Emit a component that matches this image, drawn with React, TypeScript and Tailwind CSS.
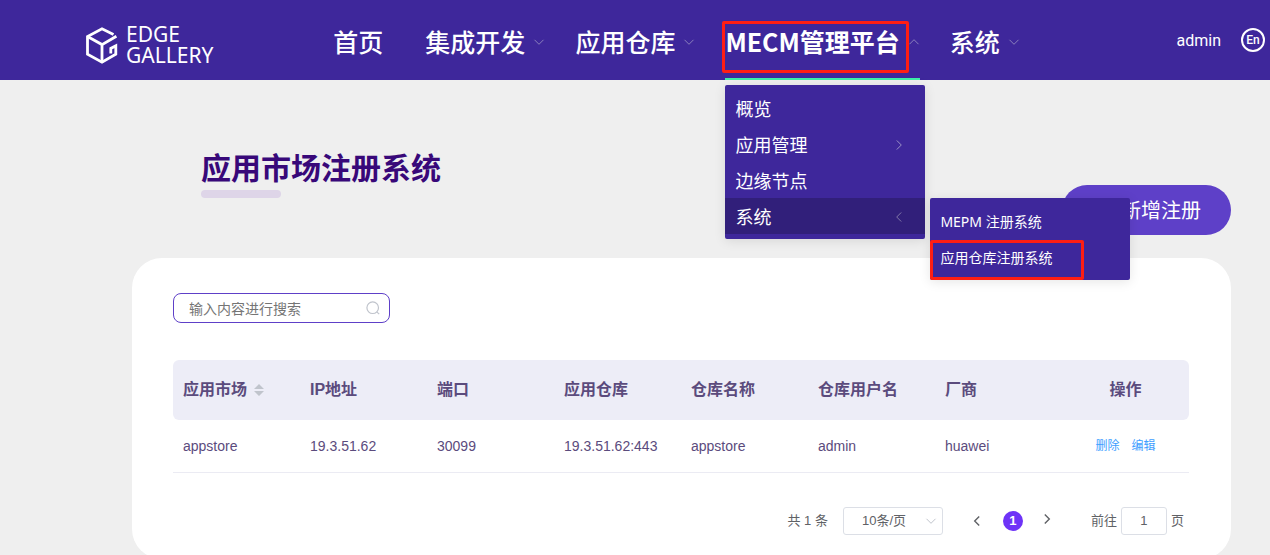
import { useState } from 'react';
import type { ReactNode } from 'react';

function Chevron({ className }: { className: string }) {
  return (
    <svg viewBox="0 0 12 12" className={className} fill="none" stroke="currentColor" aria-hidden="true">
      <path d="M1.5 3.8 6 8.3l4.5-4.5" />
    </svg>
  );
}

function Logo() {
  return (
    <a href="#home" className="flex items-center gap-2 text-white">
      <svg viewBox="0 0 32 37" className="h-[37px] w-8" fill="none" stroke="currentColor" strokeWidth="2.8" aria-hidden="true">
        <path d="M27.5 7.6 16 1.8 1.5 9.6v17.6L16 35.2l13.8-8v-8.4l-5 2.6v5" />
        <path d="M1.5 9.6 16 17.6l14.4-8.4M16 17.4v18" />
      </svg>
      <span className="flex flex-col font-['Noto_Sans',sans-serif] text-[21px] leading-[21px]">
        <span>EDGE</span>
        <span>GALLERY</span>
      </span>
    </a>
  );
}

function NavItem({ label, children }: { label: string; children?: ReactNode }) {
  const active = Boolean(children);
  return (
    <li className={active ? 'relative h-full border-b-2 border-[#3cf0a8] pt-1.5' : 'relative h-full border-b-2 border-transparent pt-1.5'}>
      <a href="#nav" className="flex h-full items-center gap-2">
        <span className={active ? 'font-bold' : 'font-medium'}>{label}</span>
        <Chevron className={active ? 'size-3 rotate-180 text-[#8b80bd]' : 'size-3 text-[#8b80bd]'} />
      </a>
      {children}
    </li>
  );
}

function MenuRow({ label, arrow }: { label: string; arrow?: boolean }) {
  return (
    <li>
      <a href="#menu" className="flex h-9 items-center justify-between px-2.5 pt-0.5">
        {label}
        {arrow && <Chevron className="mr-2.5 size-3 -rotate-90 text-[#9c92c6]" />}
      </a>
    </li>
  );
}

function PlatformMenu() {
  return (
    <ul className="absolute top-[85px] left-0 z-20 w-[200px] rounded-xs bg-[#3e279b] py-[5px] font-['Noto_Sans','Noto_Sans_CJK_SC',sans-serif] text-lg font-normal shadow-[0_2px_12px_rgba(0,0,0,0.1)]">
      <MenuRow label="概览" />
      <MenuRow label="应用管理" arrow />
      <MenuRow label="边缘节点" />
      <li className="relative">
        <a href="#system" className="flex h-9 items-center justify-between bg-[#311f7a] px-2.5 pt-0.5">
          系统
          <Chevron className="mr-2.5 size-3 rotate-90 text-[#8379a8]" />
        </a>
        <ul className="absolute top-0 left-[205px] w-[200px] rounded-xs bg-[#3e279b] py-[5px] text-sm shadow-[0_2px_12px_rgba(0,0,0,0.1)]">
          <MenuRow label="MEPM 注册系统" />
          <MenuRow label="应用仓库注册系统" />
          <li className="pointer-events-none absolute bottom-0 left-0 h-10 w-[154px] rounded-xs border-3 border-[#ff1e14]" aria-hidden="true" />
        </ul>
      </li>
    </ul>
  );
}

function Header() {
  return (
    <header className="flex h-20 items-center bg-[#3e279b] pr-[5px] pl-[86px] text-white">
      <div className="pt-2.5">
        <Logo />
      </div>
      <nav className="ml-[120px] h-full">
        <ul className="flex h-full gap-[30px] text-[25px] whitespace-nowrap font-['Noto_Sans_CJK_SC',sans-serif]">
          <li className="mr-3 h-full border-b-2 border-transparent pt-1.5">
            <a href="#index" className="flex h-full items-center font-medium">
              首页
            </a>
          </li>
          <NavItem label="集成开发" />
          <NavItem label="应用仓库" />
          <NavItem label="MECM管理平台">
            <span className="pointer-events-none absolute top-[21px] -left-[3px] h-[52px] w-[187px] rounded-xs border-3 border-[#ff1e14]" aria-hidden="true" />
            <PlatformMenu />
          </NavItem>
          <NavItem label="系统" />
        </ul>
      </nav>
      <div className="ml-auto flex items-center gap-5">
        <a href="#user" className="pt-0.5 font-['Roboto',sans-serif] text-base">
          admin
        </a>
        <button type="button" className="flex size-6 items-center justify-center rounded-full border-2 border-white font-['Roboto',sans-serif] text-xs font-medium">
          En
        </button>
      </div>
    </header>
  );
}

const columns = ['应用市场', 'IP地址', '端口', '应用仓库', '仓库名称', '仓库用户名', '厂商'];
const cells = ['appstore', '19.3.51.62', '30099', '19.3.51.62:443', 'appstore', 'admin', 'huawei'];

function RegistryTable() {
  return (
    <table className="mt-[37px] w-full table-fixed text-left font-['Liberation_Sans','Noto_Sans_CJK_SC',sans-serif] text-[#5b4b7d]">
      <thead>
        <tr className="h-[60px] bg-[#ededf7] text-base">
          {columns.map((c, i) => (
            <th key={c} className="px-2.5 font-bold whitespace-nowrap first:rounded-l-md">
              {i === 0 ? (
                <button type="button" className="flex items-center gap-[7px]">
                  {c}
                  <svg viewBox="0 0 10 12" className="h-3 w-2.5" fill="#c0c4cc" aria-hidden="true">
                    <path d="M5 0l5 5H0zM5 12l5-5H0z" />
                  </svg>
                </button>
              ) : (
                c
              )}
            </th>
          ))}
          <th className="rounded-r-md px-2.5 text-center font-bold">操作</th>
        </tr>
      </thead>
      <tbody>
        <tr className="h-[52px] border-b border-[#ebebf3] text-sm">
          {cells.map((c, i) => (
            <td key={i} className="px-2.5">
              {c}
            </td>
          ))}
          <td className="px-2.5 text-center text-xs text-[#409eff]">
            <div className="flex justify-center gap-3">
              <button type="button">删除</button>
              <button type="button">编辑</button>
            </div>
          </td>
        </tr>
      </tbody>
    </table>
  );
}

function Pagination() {
  const [page, setPage] = useState('1');
  return (
    <div className="mt-[34px] flex h-7 items-center justify-end pr-[5px] font-['Liberation_Sans','Noto_Sans_CJK_SC',sans-serif] text-[13px] text-[#606266]">
      <span>共 1 条</span>
      <div className="relative ml-[15px]">
        <select aria-label="每页条数" className="h-7 w-[100px] appearance-none rounded-[3px] border border-[#dcdfe6] bg-white pl-[18px]">
          <option>10条/页</option>
        </select>
        <Chevron className="pointer-events-none absolute top-2 right-1.5 size-3 text-[#c0c4cc]" />
      </div>
      <button type="button" aria-label="上一页" className="ml-7 text-[#606266]">
        <Chevron className="size-3 rotate-90 stroke-[1.4]" />
      </button>
      <button type="button" className="ml-5 size-5 rounded-full bg-[#6e33f7] leading-5 font-bold text-white">
        1
      </button>
      <button type="button" aria-label="下一页" className="ml-[18px] pb-1 text-[#606266]">
        <Chevron className="size-3 -rotate-90 stroke-[1.4]" />
      </button>
      <label className="ml-[38px] flex items-center gap-1">
        前往
        <input value={page} onChange={(e) => setPage(e.target.value)} className="h-7 w-[46px] rounded-[3px] border border-[#dcdfe6] text-center" />
        页
      </label>
    </div>
  );
}

export default function App() {
  return (
    <div className="min-h-screen bg-[#efefef] font-['Noto_Sans','Noto_Sans_CJK_SC',sans-serif]">
      <Header />
      <main className="pr-[39px] pl-[132px]">
        <div className="flex justify-between pt-[65px] pl-[69px]">
          <div>
            <h1 className="text-3xl leading-[45px] font-bold text-[#380879]">应用市场注册系统</h1>
            <div className="h-2 w-20 rounded-sm bg-[#ded5e8]" />
          </div>
          <button type="button" className="mt-10 h-[50px] rounded-full bg-[#5e40c8] pt-0.5 pr-[30px] pl-[59px] text-xl text-white">
            新增注册
          </button>
        </div>
        <section className="mt-[23px] rounded-[30px] bg-white pt-[35px] pr-[42px] pb-6 pl-[41px]">
          <div className="relative w-[217px]">
            <input
              type="search"
              aria-label="搜索"
              placeholder="输入内容进行搜索"
              className="block h-[30px] w-full rounded-lg border border-[#5e40c8] bg-white px-[15px] text-sm placeholder:text-[#757575]"
            />
            <svg viewBox="0 0 14 14" className="absolute top-2 right-2.5 size-3.5" fill="none" stroke="#c0c4cc" strokeWidth="1.2" aria-hidden="true">
              <circle cx="6.7" cy="6.7" r="5.8" />
              <path d="m10.8 10.8 2.4 2.4" />
            </svg>
          </div>
          <RegistryTable />
          <Pagination />
        </section>
      </main>
    </div>
  );
}
